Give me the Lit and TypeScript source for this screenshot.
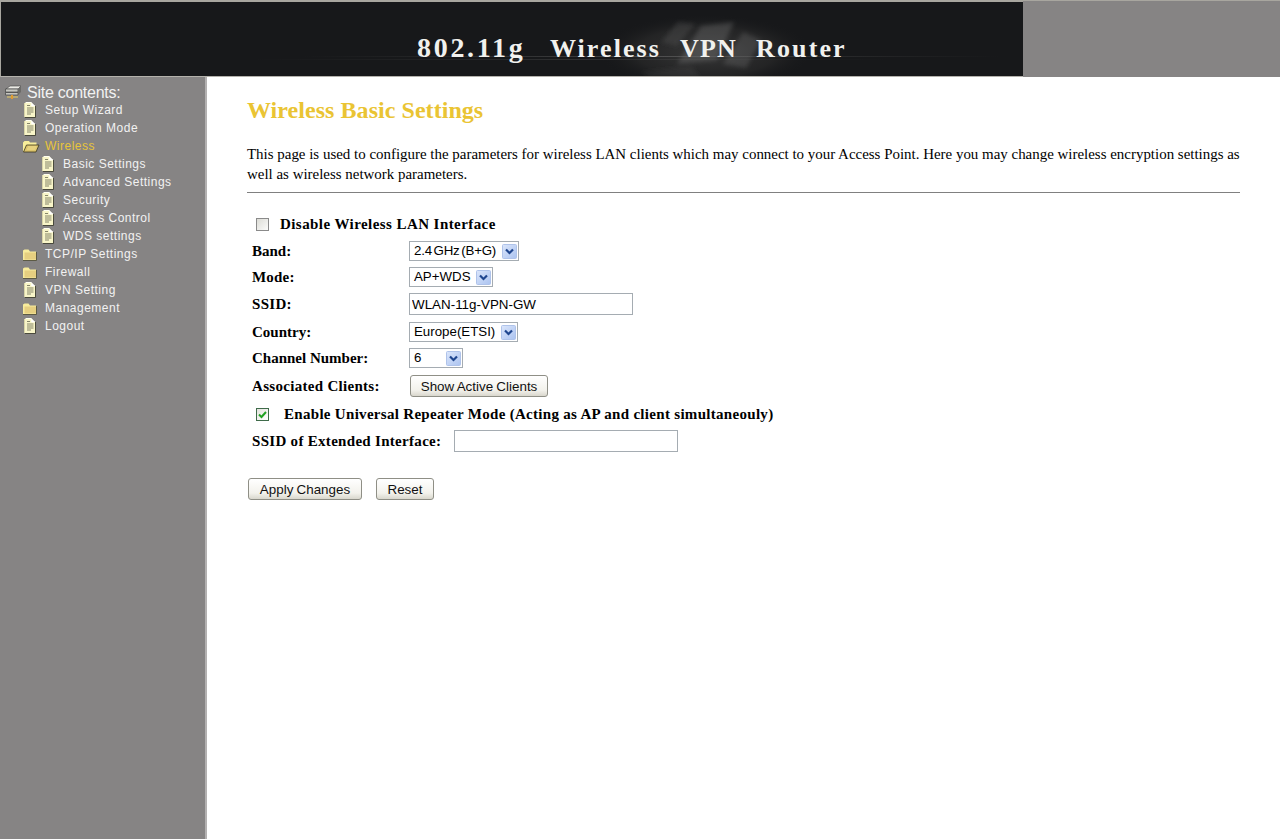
import { LitElement, html, css, svg } from "lit";
import { customElement } from "lit/decorators.js";

const docIcon = html`<svg class="ic" width="16" height="16" viewBox="0 0 16 16"><path d="M3 1H10L13 4V15H3Z" fill="#f8f5c8"/><path d="M3.5 .5H9.5V4H13" fill="none" stroke="#fffff0"/><path d="M10 1L13 4H10Z" fill="#fff"/><path d="M5 3.5H8M5 6H11.5M5 8H11.5M5 10H11.5M5 12H9" stroke="#85856a"/><path d="M13.5 4V15.5H3" fill="none" stroke="#4a4a3c"/><path d="M2.5 1V15" stroke="#d8d4a8"/></svg>`;
const folderIcon = html`<svg class="ic" width="16" height="16" viewBox="0 0 16 16"><path d="M1 4.5V14H14V5.5H8L6.5 3.5H2.5Z" fill="#f8ec9c"/><path d="M2.5 6.5H14V13.5H2.5Z" fill="#e6cf80"/><path d="M1 14.5H14.5V6" fill="none" stroke="#5c5a44"/></svg>`;
const openIcon = html`<svg class="ic" width="18" height="16" viewBox="0 0 18 16"><path d="M1 4.5L2.5 3H7L8 4.5H14.5V7H5L2 13.5H1Z" fill="#f8ee9a"/><path d="M4.5 7H17L14 14H1.5Z" fill="#dcc46c" stroke="#3a3620" stroke-width=".8"/><path d="M6 9H14.5M5 11H13.5" stroke="#f2e090"/></svg>`;
const serverIcon = html`<svg class="ic" width="18" height="16" viewBox="0 0 18 16"><path d="M2 4L6 1H17L14 4Z" fill="#ecebe6" stroke="#444" stroke-width=".6"/><path d="M1.5 4H14V7H1.5ZM1.5 7.5H14V10H1.5Z" fill="#c6c6c0" stroke="#444" stroke-width=".7"/><path d="M14 4L17 1V7L14 10Z" fill="#6b6b68"/><path d="M3 12H14" stroke="#d9c169" stroke-width="1.2"/><path d="M8 10V14" stroke="#e09a30" stroke-width="2"/></svg>`;

const arrow = html`<svg class="arrow" width="15" height="15" viewBox="0 0 15 15"><defs><linearGradient id="ag" x1="0" y1="0" x2="1" y2="1"><stop offset="0" stop-color="#dbe6fb"/><stop offset="1" stop-color="#abc3f0"/></linearGradient></defs><rect x=".5" y=".5" width="14" height="14" rx="1" fill="url(#ag)" stroke="#afc3ea"/><path d="M4 5.5L7.5 9L11 5.5" fill="none" stroke="#1f468f" stroke-width="2.2"/></svg>`;

const circuit = svg`
  <defs>
    <radialGradient id="glow" cx="0.5" cy="0.5" r="0.5"><stop offset="0" stop-color="#404040" stop-opacity=".8"/><stop offset=".65" stop-color="#2c2c2c" stop-opacity=".6"/><stop offset="1" stop-color="#17181a" stop-opacity="0"/></radialGradient>
    <linearGradient id="line" x1="0" x2="1"><stop offset="0" stop-color="#555" stop-opacity="0"/><stop offset=".5" stop-color="#777" stop-opacity=".5"/><stop offset="1" stop-color="#555" stop-opacity="0"/></linearGradient>
    <filter id="soft"><feGaussianBlur stdDeviation="2"/></filter>
  </defs>
  <ellipse cx="705" cy="50" rx="108" ry="38" fill="url(#glow)"/>
  <g filter="url(#soft)">
    <path d="M700 24L733 20L716 58L676 62Z" fill="#8a8a8a" opacity=".28"/>
    <path d="M742 30L760 38L745 66L722 62Z" fill="#8a8a8a" opacity=".24"/>
    <path d="M660 40L677 20L694 22L676 44Z" fill="#666" opacity=".28"/>
    <path d="M640 70L690 64L700 76H650Z" fill="#555" opacity=".2"/>
  </g>
  <rect x="300" y="54" width="700" height="1" fill="url(#line)"/>
  <rect x="250" y="57" width="640" height="1" fill="url(#line)" opacity=".5"/>
`;

const menu: { label: string; icon: "doc" | "folder" | "open"; sub?: boolean; active?: boolean }[] = [
  { label: "Setup Wizard", icon: "doc" },
  { label: "Operation Mode", icon: "doc" },
  { label: "Wireless", icon: "open", active: true },
  { label: "Basic Settings", icon: "doc", sub: true },
  { label: "Advanced Settings", icon: "doc", sub: true },
  { label: "Security", icon: "doc", sub: true },
  { label: "Access Control", icon: "doc", sub: true },
  { label: "WDS settings", icon: "doc", sub: true },
  { label: "TCP/IP Settings", icon: "folder" },
  { label: "Firewall", icon: "folder" },
  { label: "VPN Setting", icon: "doc" },
  { label: "Management", icon: "folder" },
  { label: "Logout", icon: "doc" },
];

const icons = { doc: docIcon, folder: folderIcon, open: openIcon };

@customElement("app-root")
export class AppRoot extends LitElement {
  static styles = css`
    :host { display: flex; flex-direction: column; height: 839px; overflow: hidden; background: #fff; font-family: "Liberation Serif", serif; color: #000; }
    .top { display: flex; height: 77px; flex: none; background: #868484; border-top: 1px solid #a8a69f; box-sizing: border-box; }
    .banner { position: relative; width: 1023px; height: 76px; box-sizing: border-box; background: #17181a; border-top: 1px solid #a8a69f; border-bottom: 1px solid #b4b2ac; border-left: 1px solid #a8a69f; overflow: hidden; display: flex; align-items: flex-end; }
    .banner svg { position: absolute; left: 0; top: 0; }
    .banner h1 { position: relative; margin: 0 0 12px 416px; font: bold 26px/30px "Liberation Serif", serif; color: #f1f1ee; letter-spacing: 2.1px; word-spacing: .9px; white-space: pre; }
    .num { font-size: 28px; letter-spacing: 2.7px; margin-right: 6px; }
    .vpn { letter-spacing: 1.2px; }
    .body { flex: 1; display: flex; min-height: 0; }
    nav { width: 207px; flex: none; box-sizing: border-box; background: #868484; border-right: 2px solid #b3b1b1; padding: 7px 0 0 4px; color: #f2f2f2; font: 12px/18px "Liberation Sans", sans-serif; letter-spacing: .5px; }
    .head { display: flex; align-items: center; gap: 5px; height: 17px; font-size: 16px; letter-spacing: -.25px; }
    .item { display: flex; align-items: center; height: 18px; padding-left: 18px; white-space: nowrap; }
    .item.sub { padding-left: 36px; }
    .item .ic { margin-right: 7px; flex: none; }
    .item.open .ic { margin-right: 5px; }
    .item.open { color: #e8c53a; }
    .ic { display: block; }
    main { flex: 1; padding: 19px 40px 0 40px; min-width: 0; }
    h2 { margin: 0; font: bold 24px/28px "Liberation Serif", serif; color: #eac433; letter-spacing: .05px; }
    p { margin: 21px 0 0; font-size: 14.95px; line-height: 19.5px; }
    hr { margin: 8px 0 18px; height: 1px; border: 0; background: #808080; }
    .form { display: grid; grid-template-columns: 157px 1fr; grid-template-rows: 26px 28px 24px 30px 26px 26px 30px 26px 28px; align-items: center; padding-left: 5px; font: bold 15px/18px "Liberation Serif", serif; }
    .wide { grid-column: 1 / -1; display: flex; align-items: center; white-space: nowrap; }
    .chk { padding-left: 4px; }
    .ls1 { letter-spacing: .2px; }
    .ls2 { letter-spacing: .3px; }
    .ls3 { letter-spacing: .43px; }
    .box { width: 13px; height: 13px; box-sizing: border-box; border: 1px solid #8a8a8a; background: linear-gradient(135deg, #dcdcd6, #fbfbfa); flex: none; display: block; }
    .box.on { border-color: #3f6b4a; background: linear-gradient(135deg, #e4e4de, #fff); }
    .box svg { display: block; }
    .gap1 { margin-right: 11px; }
    .gap2 { margin-right: 15px; }
    .sel { display: inline-flex; align-items: center; justify-content: space-between; box-sizing: border-box; height: 20px; padding: 0 1px 0 4px; border: 1px solid #a5acb2; background: #fff; font: 13.3px/16px "Liberation Sans", sans-serif; vertical-align: middle; white-space: nowrap; }
    .sel.tight { letter-spacing: -.2px; word-spacing: -1.8px; }
    .ctl { display: flex; align-items: center; }
    .txt { box-sizing: border-box; width: 224px; height: 22px; padding: 0 2px; border: 1px solid #a5acb2; background: #fff; font: 13.4px "Liberation Sans", sans-serif; color: #000; outline: none; margin: 0; }
    .ext { margin-left: 13px; }
    button { box-sizing: border-box; height: 22px; padding: 0; border: 1px solid #8f8f86; border-radius: 3px; background: linear-gradient(#fff, #f3f2ec 70%, #d9d7cd); font: 13.4px "Liberation Sans", sans-serif; word-spacing: -.5px; color: #111; }
    .btn-show { width: 138px; margin-left: 1px; }
    .actions { display: flex; gap: 14px; padding-left: 1px; margin-top: 23px; }
    .apply { width: 114px; }
    .reset { width: 58px; }
  `;

  private sel(label: string, width: number, tight = false) {
    return html`<span class="sel ${tight ? "tight" : ""}" style="width:${width}px">${label}${arrow}</span>`;
  }

  render() {
    return html`
      <div class="top">
        <div class="banner">
          <svg width="1023" height="76" viewBox="0 0 1023 76">${circuit}</svg>
          <h1><span class="num">802.11g</span>  Wireless  <span class="vpn">VPN</span>  Router</h1>
        </div>
      </div>
      <div class="body">
        <nav>
          <div class="head">${serverIcon}<span>Site contents:</span></div>
          ${menu.map(
            (m) => html`<div class="item ${m.sub ? "sub" : ""} ${m.active ? "open" : ""}">${icons[m.icon]}<span>${m.label}</span></div>`
          )}
        </nav>
        <main>
          <h2>Wireless Basic Settings</h2>
          <p>This page is used to configure the parameters for wireless LAN clients which may connect to your Access Point. Here you may change wireless encryption settings as well as wireless network parameters.</p>
          <hr />
          <div class="form">
            <div class="wide chk ls3"><span class="box gap1"></span>Disable Wireless LAN Interface</div>
            <div>Band:</div><div class="ctl">${this.sel("2.4 GHz (B+G)", 110, true)}</div>
            <div class="ls1">Mode:</div><div class="ctl">${this.sel("AP+WDS", 84)}</div>
            <div class="ls2">SSID:</div><div class="ctl"><input class="txt" type="text" .value=${"WLAN-11g-VPN-GW"} /></div>
            <div>Country:</div><div class="ctl">${this.sel("Europe(ETSI)", 109)}</div>
            <div>Channel Number:</div><div class="ctl">${this.sel("6", 54)}</div>
            <div class="ls2">Associated Clients:</div><div class="ctl"><button class="btn-show">Show Active Clients</button></div>
            <div class="wide chk ls2"><span class="box on gap2"><svg width="11" height="11" viewBox="0 0 11 11"><path d="M2 5.5L4.5 8L9 3" fill="none" stroke="#21a121" stroke-width="2"/></svg></span>Enable Universal Repeater Mode (Acting as AP and client simultaneouly)</div>
            <div class="wide ls2">SSID of Extended Interface:<input class="txt ext" type="text" /></div>
          </div>
          <div class="actions">
            <button class="apply">Apply Changes</button>
            <button class="reset">Reset</button>
          </div>
        </main>
      </div>
    `;
  }
}
